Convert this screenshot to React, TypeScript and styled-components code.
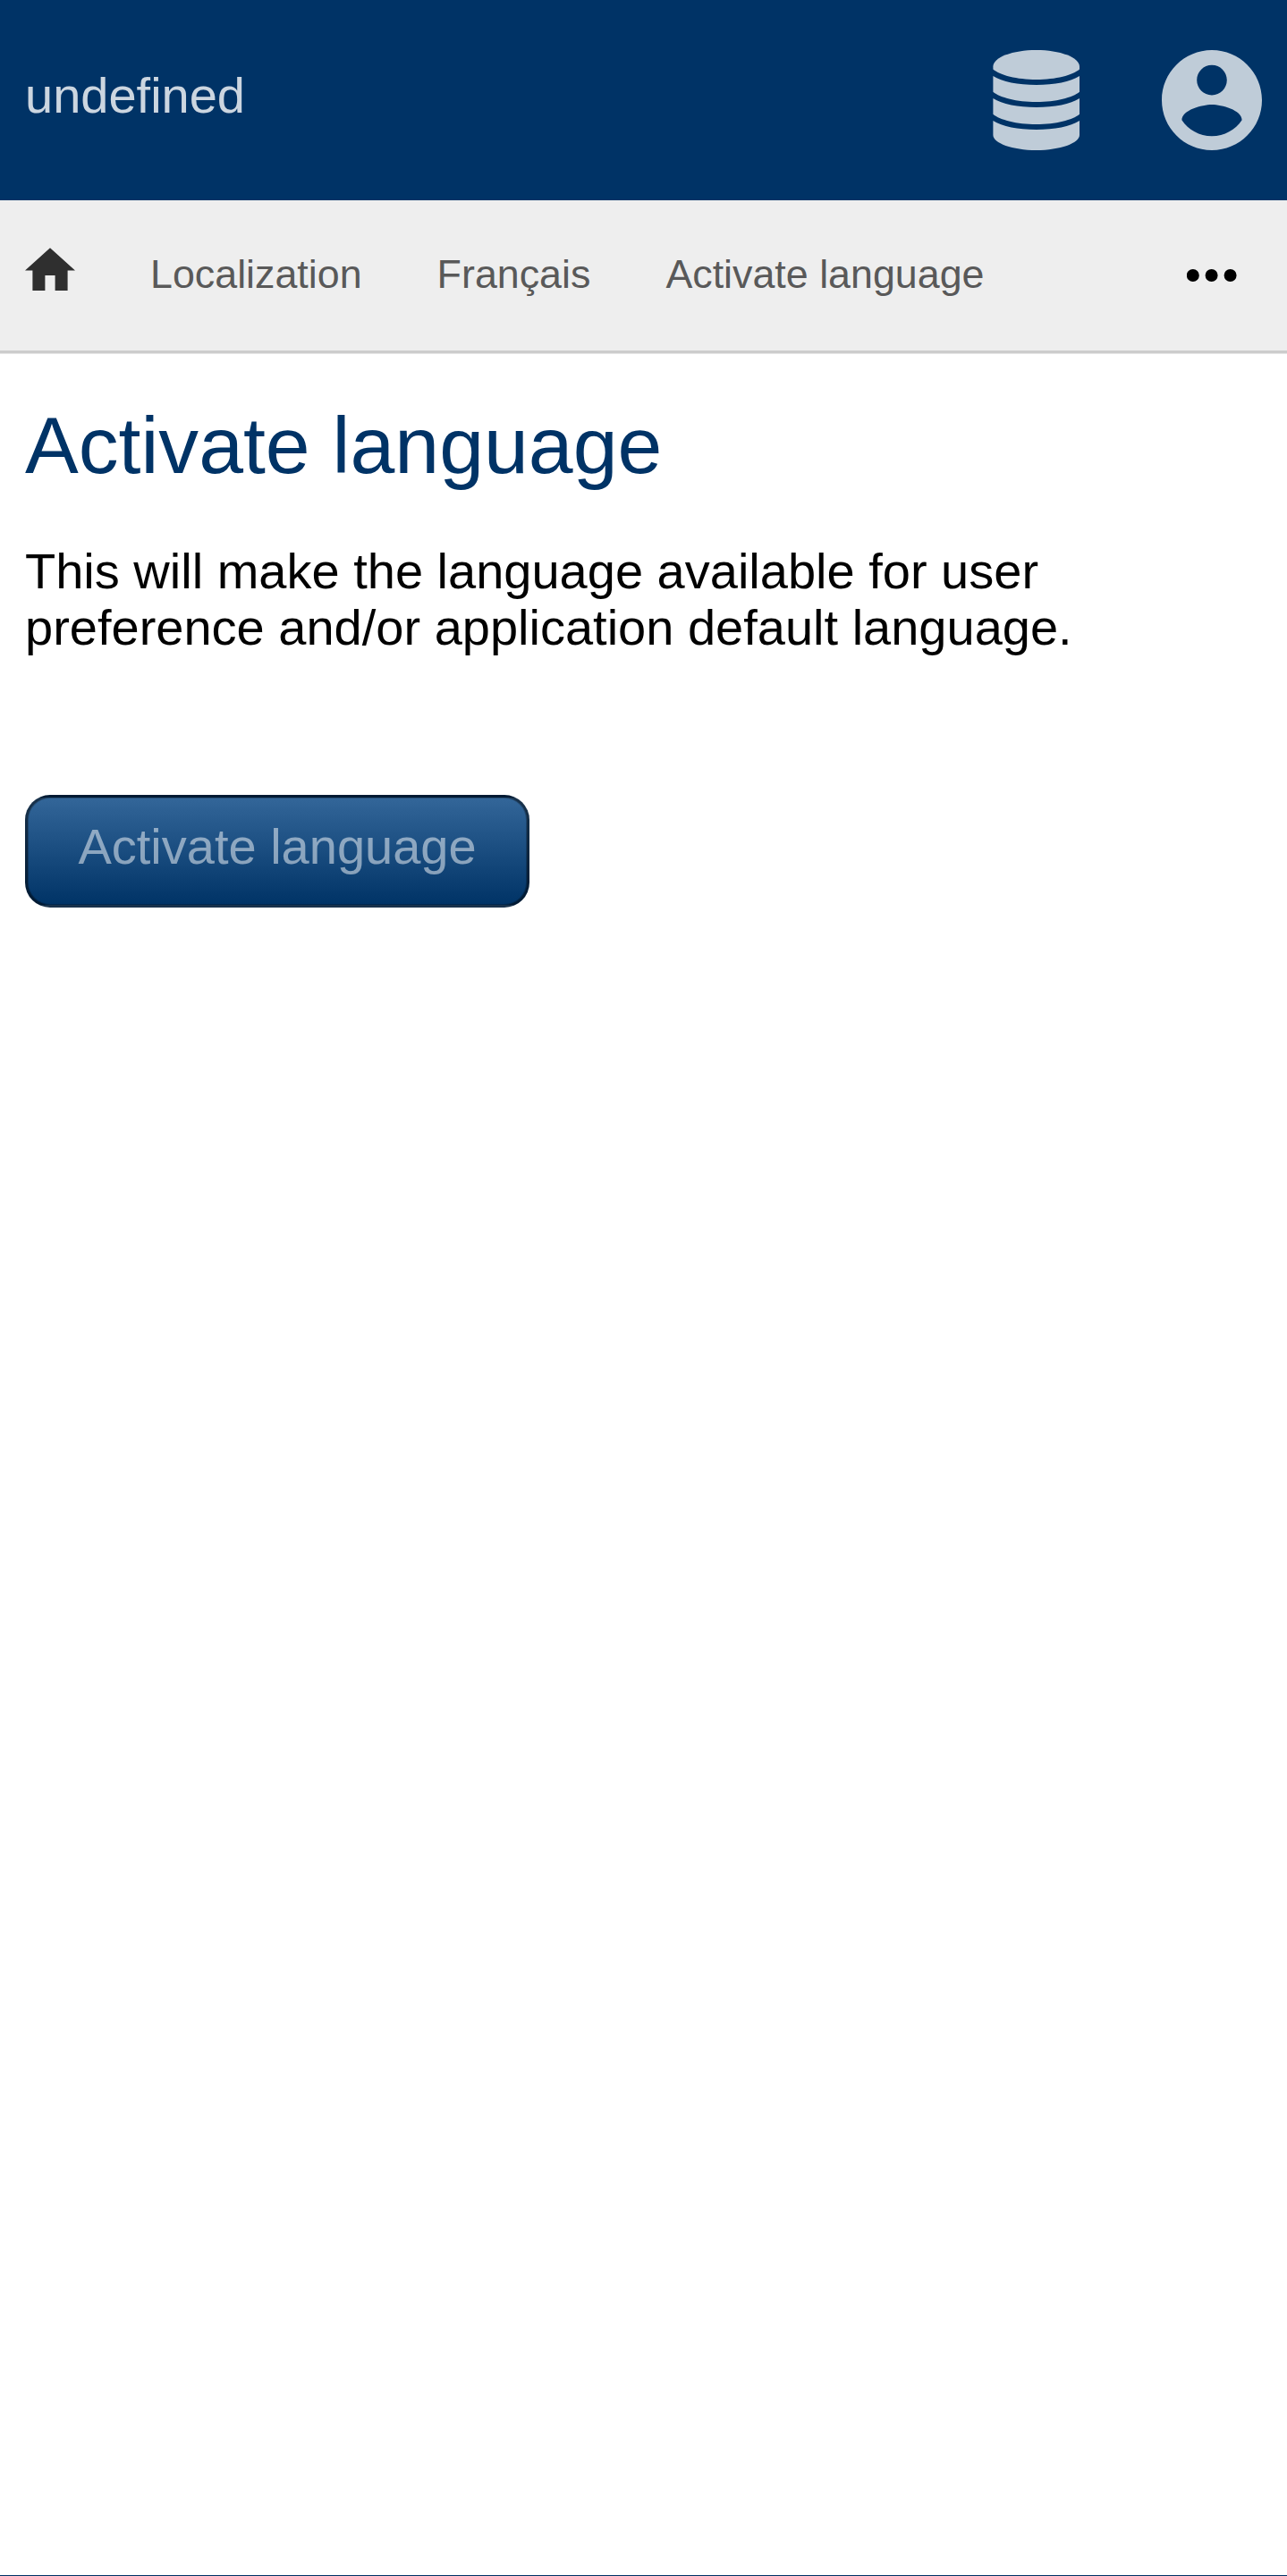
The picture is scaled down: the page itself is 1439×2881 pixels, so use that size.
import React from 'react';
import styled, { createGlobalStyle } from 'styled-components';

const GlobalStyle = createGlobalStyle`
  *, *::before, *::after { box-sizing: border-box; }
  body {
    margin: 0;
    background: #fff;
    color: #000;
    font-family: "Liberation Sans", Arial, sans-serif;
    font-size: 56px;
  }
`;

const Page = styled.div`
  display: flex;
  flex-direction: column;
  height: 2881px;
  border-bottom: 1px solid #036;
`;

const Header = styled.header`
  display: flex;
  justify-content: space-between;
  height: 224px;
  padding: 0 28px;
  background: #036;
`;

const AppName = styled.div`
  padding-top: 75px;
  line-height: 64px;
  color: rgba(255, 255, 255, 0.8);
`;

const Actions = styled.div`
  display: flex;
  align-items: center;
  gap: 84px;
`;

const HeaderIcon = styled.svg`
  display: block;
  width: 112px;
  height: 112px;
  fill: #fff;
  opacity: 0.75;
`;

const Toolbar = styled.nav`
  display: flex;
  align-items: flex-start;
  gap: 84px;
  height: 171px;
  padding: 53px 56px 0 28px;
  background: #eee;
  border-bottom: 3px solid #ccc;
  box-shadow: 0 1px 0 #e6e6e6;
  font-size: 44.8px;
  line-height: 58px;
`;

const HomeIcon = styled.svg`
  display: block;
  width: 56px;
  height: 48px;
  fill: #2f2f2f;
`;

const Crumb = styled.span`
  color: #595959;
  white-space: nowrap;
`;

const MoreIcon = styled.svg`
  display: block;
  width: 56px;
  height: 14px;
  margin: 24px 0 0 auto;
`;

const Main = styled.main`
  display: flex;
  flex-direction: column;
  align-items: flex-start;
  padding: 52px 28px 0;
`;

const Title = styled.h1`
  margin: 0;
  color: #036;
  font-size: 89.6px;
  font-weight: 400;
  line-height: 103px;
`;

const Description = styled.p`
  width: 1240px;
  margin: 57px 0 0;
  line-height: 63px;
`;

const SubmitButton = styled.button`
  width: 564px;
  height: 126px;
  margin: 156px 0 0;
  padding: 0 0 10px;
  border: 3px solid rgba(0, 0, 0, 0.5);
  border-radius: 28px;
  background: linear-gradient(#369, #036);
  box-shadow: inset 0 0 0 1px rgba(0, 0, 0, 0.22);
  color: rgba(255, 255, 255, 0.5);
  font: inherit;
  line-height: 64px;
  white-space: nowrap;
`;

export default function App() {
  return (
    <>
      <GlobalStyle />
      <Page>
        <Header>
          <AppName>undefined</AppName>
          <Actions>
            <HeaderIcon viewBox="0.6 0 112 112">
              <path d="M8 18.500C8 8 30 0 56.300 0S104.600 8 104.600 18.500V21.500C97 28 78 33 56.300 33S15.500 28 8 21.500z" />
              <path d="M8 29C18 35.500 36 39 56.300 39S94.500 35.500 104.600 29V46.700C97 53 78 58 56.300 58S15.500 53 8 46.700z" />
              <path d="M8 54C18 60.500 36 64 56.300 64S94.500 60.500 104.600 54V71.700C97 78 78 83 56.300 83S15.500 78 8 71.700z" />
              <path d="M8 79C18 85.500 36 89 56.300 89S94.500 85.500 104.600 79V95C104.600 104 83 112 56.300 112S8 104 8 95z" />
            </HeaderIcon>
            <HeaderIcon viewBox="2 2 20 20">
              <path d="M12 2C6.480 2 2 6.480 2 12s4.480 10 10 10 10-4.480 10-10S17.520 2 12 2zm0 3c1.660 0 3 1.340 3 3s-1.340 3-3 3-3-1.340-3-3 1.340-3 3-3zm0 14.200c-2.500 0-4.710-1.280-6-3.220.030-1.990 4-3.080 6-3.080 1.990 0 5.970 1.090 6 3.080-1.290 1.940-3.500 3.220-6 3.220z" />
            </HeaderIcon>
          </Actions>
        </Header>
        <Toolbar>
          <HomeIcon viewBox="2 2.900 20 17.143">
            <path d="M10 20v-6h4v6h5v-8h3L12 3 2 12h3v8z" />
          </HomeIcon>
          <Crumb>Localization</Crumb>
          <Crumb>Français</Crumb>
          <Crumb>Activate language</Crumb>
          <MoreIcon viewBox="0 0 56 14">
            <circle cx="6.800" cy="7" r="7" />
            <circle cx="27.600" cy="7" r="7" />
            <circle cx="48.600" cy="7" r="7" />
          </MoreIcon>
        </Toolbar>
        <Main>
          <Title>Activate language</Title>
          <Description>
            This will make the language available for user preference and/or application default language.
          </Description>
          <SubmitButton type="button">Activate language</SubmitButton>
        </Main>
      </Page>
    </>
  );
}
